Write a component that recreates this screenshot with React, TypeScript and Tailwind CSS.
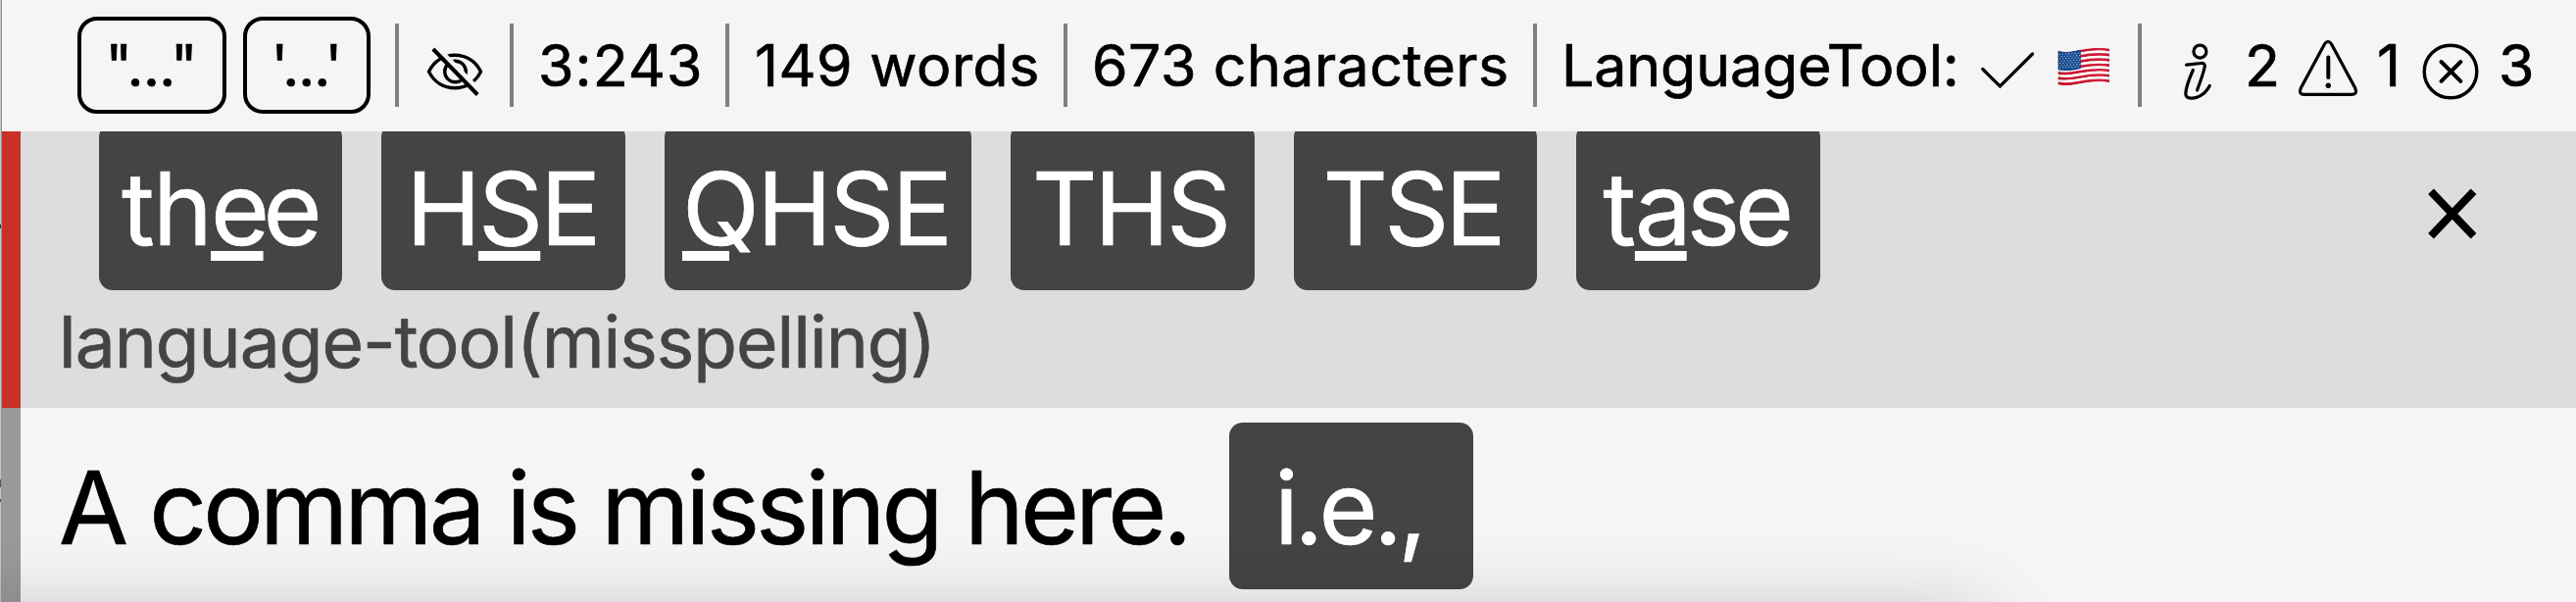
import type { ReactNode } from 'react';

function Separator() {
  return <div className="h-[85px] w-[4px] shrink-0 bg-[#808080]" />;
}

function QuoteButton({ className, children }: { className: string; children: ReactNode }) {
  return (
    <button
      className={`flex h-[99px] shrink-0 items-center rounded-[20px] border-4 border-black pt-[1px] whitespace-nowrap ${className}`}
    >
      {children}
    </button>
  );
}

function EyeOffIcon() {
  return (
    <svg className="h-[60px] w-[64px]" viewBox="432 43 64 60" fill="none" stroke="#000" strokeWidth="3.4">
      <path d="M437.5 73C443 62 453 56.2 464 56.2S485 62 490.500 73C485 84 475 89.700 464 89.700S443 84 437.500 73Z" strokeLinejoin="round" />
      <circle cx="464.500" cy="73" r="10.800" />
      <path d="M443.500 46L491 94.500" stroke="#f5f5f5" strokeWidth="5" />
      <path d="M441.800 50L487.200 96.500" strokeWidth="4" />
    </svg>
  );
}

function CheckIcon() {
  return (
    <svg className="h-[50px] w-[60px] shrink-0" viewBox="2018 48 60 50" fill="none" stroke="#000" strokeWidth="3.200" strokeLinecap="round">
      <path d="M2022.800 70.500L2040.400 88L2073.500 55" />
    </svg>
  );
}

const stripes = [0, 1, 2, 3, 4, 5, 6, 7, 8, 9, 10, 11, 12];
const starRows = [0, 1, 2, 3, 4, 5, 6];
const starCols = [0, 1, 2, 3, 4, 5, 6];

function FlagIcon() {
  return (
    <svg className="h-[44px] w-[56px] shrink-0" viewBox="2098 43 56 44">
      <defs>
        <clipPath id="flag">
          <path d="M2099.700 50C2115.700 54 2127.700 43.500 2152 47.800V82.300C2127.700 78 2115.700 88.500 2099.700 84.300Z" />
        </clipPath>
        <linearGradient id="shade" x1="0" x2="1" y1="0" y2="0">
          <stop offset="0" stopColor="#000" stopOpacity="0.120" />
          <stop offset="0.200" stopColor="#000" stopOpacity="0" />
          <stop offset="0.850" stopColor="#fff" stopOpacity="0.080" />
          <stop offset="1" stopColor="#000" stopOpacity="0.100" />
        </linearGradient>
      </defs>
      <g clipPath="url(#flag)">
        {stripes.map((i) => (
          <path
            key={i}
            d="M2099 50C2115.700 54 2127.700 43.500 2153 47.800"
            transform={`translate(0 ${1.3 + i * 2.64})`}
            fill="none"
            stroke={i % 2 === 0 ? '#d0102c' : '#ffffff'}
            strokeWidth="2.800"
          />
        ))}
        <path d="M2099 48C2108 53 2115 50.500 2122.800 48V68C2115 70 2108 71 2099 69Z" fill="#15498f" />
        {starRows.map((r) =>
          starCols.map((c) => (
            <circle key={`${r}-${c}`} cx={2101.5 + c * 3.1 + (r % 2) * 1.5} cy={53.2 + r * 2.3 - c * 0.15} r="0.650" fill="#b9d3ee" />
          )),
        )}
        <rect x="2099" y="43" width="54" height="44" fill="url(#shade)" />
      </g>
    </svg>
  );
}

function InfoIcon() {
  return (
    <svg className="h-[64px] w-[36px] shrink-0" viewBox="2224 41 36 64" fill="none" stroke="#000" strokeWidth="3.200" strokeLinecap="round" strokeLinejoin="round">
      <circle cx="2244.400" cy="52.600" r="6.500" />
      <path d="M2230.600 66.200L2245.500 64.500Q2250.300 64 2249 69C2247.500 76 2244.500 84 2241.500 92" />
      <path d="M2237.300 71.500C2233.500 80 2230 90 2229.800 95.500C2229.800 101.500 2238 100.500 2242 99C2247 97 2251.500 93 2254.300 87.500" />
    </svg>
  );
}

function WarningIcon() {
  return (
    <svg className="h-[62px] w-[64px] shrink-0" viewBox="2343 38 64 62" fill="none" stroke="#000" strokeWidth="3.200" strokeLinecap="round" strokeLinejoin="round">
      <path d="M2371.200 45.500Q2375 39.500 2378.800 45.500L2402.800 90Q2405.200 96.300 2399.500 96.300H2350.500Q2344.800 96.300 2347.200 90Z" />
      <path d="M2375.300 58.500V79" strokeWidth="4" />
      <circle cx="2375.300" cy="87.300" r="2.700" fill="#000" stroke="none" />
    </svg>
  );
}

function ErrorIcon() {
  return (
    <svg className="h-[60px] w-[60px] shrink-0" viewBox="2470 43 60 60" fill="none" stroke="#000" strokeWidth="3.400" strokeLinecap="round">
      <circle cx="2500" cy="73" r="26.800" />
      <path d="M2490.500 63L2510.300 82.800M2510.300 63L2490.500 82.800" strokeWidth="4" />
    </svg>
  );
}

function CloseIcon() {
  return (
    <svg className="h-[56px] w-[56px]" viewBox="0 0 56 56" fill="none" stroke="#000" strokeWidth="8">
      <path d="M6 5.300L49.500 50.700M49.500 5.300L6 50.700" />
    </svg>
  );
}

function Chip({ className, children }: { className: string; children: ReactNode }) {
  return (
    <button
      className={`flex h-[170px] shrink-0 items-center rounded-[14px] bg-[#444444] pt-[3px] text-left text-[103px] leading-[120px] whitespace-nowrap text-white ${className}`}
    >
      <span>{children}</span>
    </button>
  );
}

function Key({ className = '', children }: { className?: string; children: string }) {
  return (
    <span className={`underline decoration-white decoration-[10px] underline-offset-[6px] ${className}`}>{children}</span>
  );
}

function StatusBar() {
  return (
    <header className="flex h-[134px] shrink-0 items-center pb-[1px] pl-[77px] text-[59px] leading-[72px] whitespace-nowrap">
      <QuoteButton className="w-[152px] pl-[24.5px] tracking-[-0.6px]">"..."</QuoteButton>
      <QuoteButton className="ml-[17px] w-[130px] pl-[24.5px] tracking-[-1px]">'...'</QuoteButton>
      <div className="w-[25px] shrink-0" />
      <Separator />
      <div className="flex w-[113px] shrink-0 justify-center pt-[13px]">
        <EyeOffIcon />
      </div>
      <Separator />
      <div className="w-[216px] shrink-0 pt-[1px] pl-[25px] tracking-[1.1px]">3:243</div>
      <Separator />
      <div className="w-[341px] shrink-0 pt-[1px] pl-[26px] tracking-[0.5px]">149 words</div>
      <Separator />
      <div className="w-[475px] shrink-0 pt-[1px] pl-[25px] tracking-[0.45px]">673 characters</div>
      <Separator />
      <div className="flex w-[613px] shrink-0 items-center pt-[1px] pl-[25px]">
        <span className="w-[425px] shrink-0 tracking-[-0.1px]">LanguageTool:</span>
        <span className="pt-[12px]">
          <CheckIcon />
        </span>
        <span className="ml-[20px]">
          <FlagIcon />
        </span>
      </div>
      <Separator />
      <div className="flex items-center pt-[1px] pl-[39px]">
        <span className="pt-[12px]">
          <InfoIcon />
        </span>
        <span className="ml-[30px] w-[53px] shrink-0">2</span>
        <span className="pt-[4px]">
          <WarningIcon />
        </span>
        <span className="ml-[18px] w-[45px] shrink-0">1</span>
        <span className="pt-[12px]">
          <ErrorIcon />
        </span>
        <span className="ml-[19px]">3</span>
      </div>
    </header>
  );
}

export default function App() {
  return (
    <div className="relative flex h-[614px] w-[2628px] overflow-hidden bg-[#f5f5f5] font-['Inter','Liberation_Sans',sans-serif] text-black [-webkit-text-stroke:0.7px_currentColor]">
      <div className="flex w-[2px] shrink-0 flex-col border-r border-[#929496] bg-[#c3c5c6]">
        <div className="mt-[229px] h-[4px] bg-[#333333]" />
        <div className="mt-[256px] h-[8px] bg-[#555555]" />
        <div className="mt-[12px] h-[3px] bg-[#555555]" />
      </div>
      <div className="flex min-w-0 grow flex-col">
        <StatusBar />
        <section className="flex h-[282px] shrink-0 overflow-hidden border-l-[19px] border-[#c93027] bg-[#dddddd]">
          <div className="flex w-[2453px] shrink-0 flex-col">
            <div className="-mt-[8px] flex gap-[40px] pl-[80px]">
              <Chip className="w-[248.2px] pl-[23px] tracking-[-1.8px]">
                th<Key className="tracking-[-6.5px]">e</Key>e
              </Chip>
              <Chip className="w-[248.8px] pl-[25px] tracking-[-2.8px]">
                H<Key>S</Key>E
              </Chip>
              <Chip className="w-[313px] pl-[18px] tracking-[-2.5px]">
                <Key>Q</Key>HSE
              </Chip>
              <Chip className="w-[248.6px] pl-[22px] tracking-[-3px]">THS</Chip>
              <Chip className="w-[248.6px] pl-[30px] tracking-[-3.8px]">TSE</Chip>
              <Chip className="w-[248.6px] pl-[27px] tracking-[-5px]">
                <span className="tracking-[-1px]">t</span>
                <Key>a</Key>se
              </Chip>
            </div>
            <div className="mt-[8px] pl-[39px] text-[73px] leading-[90px] tracking-[-1px] text-[#444444]">
              language-tool(misspelling)
            </div>
          </div>
          <button className="mt-[56px] flex h-[56px] w-[56px] items-center justify-center">
            <CloseIcon />
          </button>
        </section>
        <section className="flex h-[198px] shrink-0 items-start border-l-[19px] border-[#999999] pt-[15px]">
          <div className="flex h-[170px] w-[1233px] shrink-0 items-center pt-[3px] pl-[39px] text-[103px] leading-[120px] tracking-[-3.9px] whitespace-nowrap">
            A comma is missing here.
          </div>
          <Chip className="w-[249px] pl-[46px] tracking-[-4.5px]">i.e.,</Chip>
        </section>
      </div>
      <div className="pointer-events-none absolute top-[622px] -left-[200px] h-[300px] w-[2230px] rounded-[30px] shadow-[0_0_80px_rgba(0,0,0,0.19)]" />
    </div>
  );
}
